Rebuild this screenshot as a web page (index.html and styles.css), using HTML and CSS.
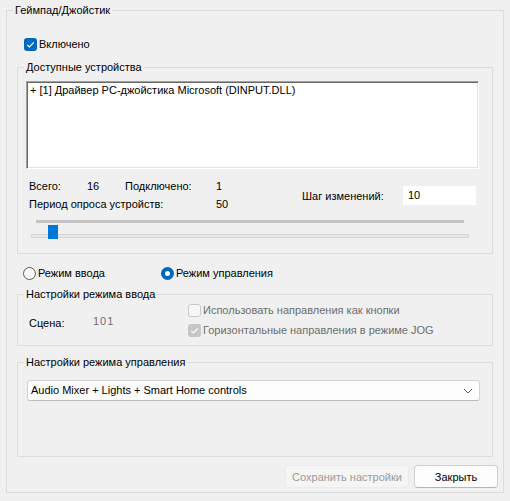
FILE: index.html
```html
<!DOCTYPE html>
<html>
<head>
<meta charset="utf-8">
<link rel="stylesheet" href="styles.css">
</head>
<body>
<fieldset class="group outer">
  <legend>Геймпад/Джойстик</legend>
  <div class="outer-body">
    <label class="check-row enabled-row"><span class="cb cb-on"><svg viewBox="0 0 13 13" width="13" height="13"><path d="M3.2 6.8 L5.4 9 L9.8 4.4" fill="none" stroke="#fff" stroke-width="1.2"/></svg></span>Включено</label>

    <fieldset class="group devices">
      <legend>Доступные устройства</legend>
      <div class="devices-body">
        <div class="listbox"><div class="list-item">+ [1] Драйвер PC-джойстика Microsoft (DINPUT.DLL)</div></div>
        <div class="stats">
          <div class="stats-grid">
            <span>Всего:</span><span>16</span><span>Подключено:</span><span>1</span>
            <span class="span3">Период опроса устройств:</span><span>50</span>
          </div>
          <div class="step">
            <span class="step-label">Шаг изменений:</span>
            <span class="edit">10</span>
          </div>
        </div>
        <div class="slider-bar"></div>
        <div class="track"><div class="thumb"></div></div>
      </div>
    </fieldset>

    <div class="radio-row">
      <label class="radio-item first"><span class="radio"></span>Режим ввода</label>
      <label class="radio-item"><span class="radio radio-on"></span>Режим управления</label>
    </div>

    <fieldset class="group input-mode">
      <legend>Настройки режима ввода</legend>
      <div class="input-body">
        <div class="scene"><span class="scene-label">Сцена:</span><span class="scene-val">101</span></div>
        <div class="checks">
          <label class="check-row disabled"><span class="cb cb-dis"></span>Использовать направления как кнопки</label>
          <label class="check-row disabled"><span class="cb cb-dis-on"><svg viewBox="0 0 13 13" width="13" height="13"><path d="M3.2 6.8 L5.4 9 L9.8 4.4" fill="none" stroke="#fff" stroke-width="1.2"/></svg></span>Горизонтальные направления в режиме JOG</label>
        </div>
      </div>
    </fieldset>

    <fieldset class="group control-mode">
      <legend>Настройки режима управления</legend>
      <div class="control-body">
        <div class="combo">
          <span>Audio Mixer + Lights + Smart Home controls</span>
          <svg class="chev" viewBox="0 0 10 6" width="10" height="6"><path d="M1 1 L5 5 L9 1" fill="none" stroke="#5f5f5f" stroke-width="1"/></svg>
        </div>
      </div>
    </fieldset>

    <div class="buttons">
      <button class="btn btn-dis">Сохранить настройки</button>
      <button class="btn">Закрыть</button>
    </div>
  </div>
</fieldset>
</body>
</html>
```

FILE: styles.css
```css
html, body {
  margin: 0;
  padding: 0;
}
body {
  background: #f0f0f0;
  font-family: "Liberation Sans", Arial, sans-serif;
  font-size: 11px;
  line-height: 16px;
  color: #000;
  width: 510px;
  height: 501px;
  overflow: hidden;
}
.group {
  border: 1px solid #dcdcdc;
  margin: 0;
  padding: 0;
  min-width: 0;
}
.group > legend {
  padding: 0 2px;
  margin-left: 6px;
  line-height: 16px;
}
.outer {
  margin: 2px 0 0 6px;
  width: 498px;
  box-sizing: border-box;
}
.outer-body {
  padding: 0 10px 4px 10px;
}
.check-row {
  display: flex;
  align-items: center;
  gap: 2px;
  height: 16px;
  white-space: nowrap;
}
.enabled-row {
  margin-top: 18px;
  margin-left: 7px;
}
.cb {
  width: 13px;
  height: 13px;
  box-sizing: border-box;
  border-radius: 3px;
  display: block;
  flex: none;
}
.cb svg { display: block; }
.cb-on {
  background: #0067c0;
}
.cb-dis {
  border: 1px solid #c8c8c8;
  background: #f7f7f7;
}
.cb-dis-on {
  background: #c6c6c6;
}
.devices {
  margin-top: 7px;
}
.devices-body {
  padding: 6px 13px 15px 8px;
}
.listbox {
  width: 453px;
  height: 88px;
  box-sizing: border-box;
  background: #fff;
  border: 1px solid;
  border-color: #a0a0a0 #fff #fff #a0a0a0;
  box-shadow: inset 1px 1px 0 #696969, inset -1px -1px 0 #e3e3e3;
  padding-left: 3px;
  white-space: nowrap;
}
.stats {
  display: flex;
  margin-top: 8px;
}
.stats-grid {
  display: grid;
  grid-template-columns: 58px 38px 91px auto;
  width: 273px;
  margin-left: 3px;
  line-height: 18px;
  white-space: nowrap;
}
.span3 {
  grid-column: span 3;
}
.step {
  display: flex;
  align-items: center;
  margin-top: 9px;
  height: 19px;
}
.step-label {
  width: 101px;
}
.edit {
  width: 73px;
  height: 19px;
  box-sizing: border-box;
  background: #fff;
  padding-left: 5px;
  line-height: 19px;
}
.slider-bar {
  margin-top: 7px;
  margin-left: 10px;
  width: 428px;
  height: 3px;
  background: #c4c4c4;
}
.track {
  position: relative;
  margin-top: 11px;
  margin-left: 5px;
  width: 438px;
  height: 4px;
  box-sizing: border-box;
  background: #e7e7e7;
  border: 1px solid #d6d6d6;
}
.thumb {
  position: absolute;
  left: 16px;
  top: -10px;
  width: 10px;
  height: 14px;
  background: #0078d7;
}
.radio-row {
  display: flex;
  align-items: center;
  height: 16px;
  margin-top: 11px;
  padding-left: 6px;
  white-space: nowrap;
}
.radio-item {
  display: flex;
  align-items: center;
  gap: 2px;
}
.radio-item.first {
  width: 138px;
}
.radio {
  width: 13px;
  height: 13px;
  box-sizing: border-box;
  border-radius: 50%;
  border: 1px solid #5a5a5a;
  background: #f7f7f7;
  flex: none;
  display: flex;
  align-items: center;
  justify-content: center;
}
.radio-on {
  border: none;
  background: #0067c0;
}
.radio-on::after {
  content: "";
  width: 5px;
  height: 5px;
  border-radius: 50%;
  background: #fff;
}
.input-mode {
  margin-top: 5px;
}
.input-body {
  display: flex;
  padding: 0 0 7px 11px;
}
.scene {
  width: 159px;
  margin-top: 13px;
  display: flex;
}
.scene-label {
  width: 64px;
}
.scene-val {
  color: #6d6d6d;
  margin-top: -2px;
  letter-spacing: 1px;
}
.checks {
  display: flex;
  flex-direction: column;
  gap: 4px;
}
.disabled {
  color: #6d6d6d;
}
.control-mode {
  margin-top: 8px;
}
.control-body {
  padding: 10px 12px 55px 9px;
}
.combo {
  width: 453px;
  height: 21px;
  box-sizing: border-box;
  background: #fdfdfd;
  border: 1px solid #d3d3d3;
  border-bottom-color: #bcbcbc;
  border-radius: 3px;
  display: flex;
  align-items: center;
  justify-content: space-between;
  padding: 0 6px 0 3px;
  line-height: 19px;
  white-space: nowrap;
}
.chev {
  display: block;
}
.buttons {
  display: flex;
  justify-content: flex-end;
  gap: 5px;
  margin-top: 8px;
  margin-right: -5px;
}
.btn {
  font-family: "Liberation Sans", Arial, sans-serif;
  font-size: 11px;
  line-height: 16px;
  height: 23px;
  box-sizing: border-box;
  border-radius: 4px;
  padding: 0;
  margin: 0;
  background: #fdfdfd;
  border: 1px solid #d0d0d0;
  border-bottom-color: #b5b5b5;
  color: #000;
  width: 84px;
  white-space: nowrap;
}
.btn-dis {
  width: 124px;
  background: #f5f5f5;
  border-color: #ececec;
  color: #9a9a9a;
}
```
